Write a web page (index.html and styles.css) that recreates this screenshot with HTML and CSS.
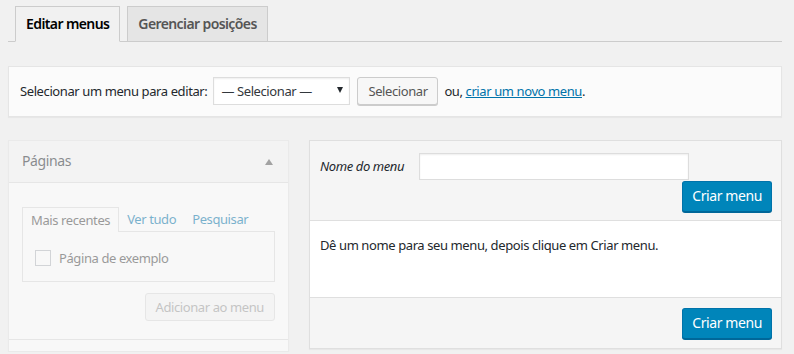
FILE: index.html
```html
<!DOCTYPE html>
<html lang="pt-BR">
<head>
    <meta charset="UTF-8">
    <title>Menus</title>
    <link rel="stylesheet" href="styles.css">
</head>
<body>
    <div class="wrap">
        <h2 class="nav-tab-wrapper">
            <a href="#" class="nav-tab nav-tab-active">Editar menus</a>
            <a href="#" class="nav-tab">Gerenciar posições</a>
        </h2>

        <div class="manage-menus">
            <label for="select-menu">Selecionar um menu para editar:</label>
            <div class="select-box">
                <span>— Selecionar —</span>
                <span class="select-arrow"></span>
            </div>
            <button class="button">Selecionar</button>
            <span class="add-new">ou, <a href="#">criar um novo menu</a>.</span>
        </div>

        <div class="nav-menus">
            <!-- left column, disabled until a menu exists -->
            <div class="menu-settings disabled">
                <div class="postbox">
                    <div class="section-title">
                        <h3>Páginas</h3>
                        <span class="toggle"></span>
                    </div>
                    <div class="section-content">
                        <ul class="tabs">
                            <li class="tabs-active">Mais recentes</li>
                            <li><a href="#">Ver tudo</a></li>
                            <li><a href="#">Pesquisar</a></li>
                        </ul>
                        <div class="tabs-panel">
                            <label class="item"><span class="checkbox"></span> Página de exemplo</label>
                        </div>
                        <div class="add-row">
                            <button class="button">Adicionar ao menu</button>
                        </div>
                    </div>
                    <div class="section-next"></div>
                </div>
            </div>

            <!-- right column -->
            <div class="menu-edit">
                <div class="menu-header">
                    <div class="menu-name-row">
                        <label for="menu-name">Nome do menu</label>
                        <input type="text" id="menu-name">
                    </div>
                    <div class="actions">
                        <button class="button-primary">Criar menu</button>
                    </div>
                </div>
                <div class="menu-body">
                    <p>Dê um nome para seu menu, depois clique em Criar menu.</p>
                </div>
                <div class="menu-footer">
                    <button class="button-primary">Criar menu</button>
                </div>
            </div>
        </div>
    </div>
</body>
</html>
```

FILE: styles.css
```css
* {
    margin: 0;
    padding: 0;
    box-sizing: border-box;
}

body {
    background: #f1f1f1;
    color: #444;
    font-family: "Noto Sans", "Open Sans", sans-serif;
    font-size: 13px;
    line-height: 1.4em;
    letter-spacing: -0.4px;
}

a {
    color: #0073aa;
}

.wrap {
    margin: 0 12px 0 8px;
}

/* Tabs */
.nav-tab-wrapper {
    display: flex;
    padding: 6px 0 0 7px;
    border-bottom: 1px solid #ccc;
    font-size: 14px;
    font-weight: 600;
    line-height: 24px;
    letter-spacing: -0.6px;
}

.nav-tab {
    display: block;
    margin-right: 7px;
    margin-bottom: -1px;
    padding: 5px 10px;
    border: 1px solid #ccc;
    background: #e5e5e5;
    color: #555;
    text-decoration: none;
}

.nav-tab-active {
    background: #f1f1f1;
    border-bottom-color: #f1f1f1;
    color: #000;
}

/* Select menu bar */
.manage-menus {
    display: flex;
    align-items: center;
    margin-top: 24px;
    padding: 10px 10px 11px 11px;
    background: #fbfbfb;
    border: 1px solid #e5e5e5;
    box-shadow: 0 1px 1px rgba(0, 0, 0, 0.04);
    color: #23282d;
}

.select-box {
    display: flex;
    align-items: center;
    justify-content: space-between;
    width: 137px;
    height: 28px;
    margin-left: 6px;
    padding: 0 6px 0 7px;
    background: #fff;
    border: 1px solid #ddd;
    box-shadow: inset 0 1px 2px rgba(0, 0, 0, 0.07);
    color: #32373c;
}

.select-arrow {
    width: 0;
    height: 0;
    margin-top: -2px;
    border-left: 3px solid transparent;
    border-right: 3px solid transparent;
    border-top: 6px solid #23282d;
}

.button {
    height: 28px;
    padding: 0 10px 1px;
    background: #f7f7f7;
    border: 1px solid #ccc;
    border-radius: 3px;
    box-shadow: 0 1px 0 #ccc;
    color: #555;
    font-family: inherit;
    font-size: 13px;
    letter-spacing: inherit;
}

.manage-menus .button {
    width: 81px;
    margin-left: 7px;
}

.add-new {
    margin-left: 6px;
}

/* Columns */
.nav-menus {
    display: flex;
    align-items: flex-start;
    gap: 20px;
    margin-top: 23px;
}

.menu-settings {
    width: 281px;
    flex-shrink: 0;
}

.disabled {
    opacity: 0.5;
}

.postbox {
    background: #fff;
    border: 1px solid #e5e5e5;
    box-shadow: 0 1px 1px rgba(0, 0, 0, 0.04);
}

.section-title {
    display: flex;
    align-items: center;
    justify-content: space-between;
    height: 42px;
    padding: 0 15px 0 13px;
    background: #f5f5f5;
    border-bottom: 1px solid #ddd;
}

.section-title h3 {
    font-size: 14px;
    font-weight: 400;
    color: #23282d;
}

.toggle {
    width: 0;
    height: 0;
    border-left: 4px solid transparent;
    border-right: 4px solid transparent;
    border-bottom: 6px solid #555;
}

.section-content {
    padding: 24px 13px 18px 13px;
}

.tabs {
    display: flex;
    list-style: none;
    line-height: 24px;
}

.tabs li {
    padding: 0 8px 0 8px;
}

.tabs li a {
    text-decoration: none;
}

.tabs-active {
    background: #fff;
    border: 1px solid #ddd;
    border-bottom: none;
    color: #444;
    position: relative;
    z-index: 1;
    margin-bottom: -1px;
}

.tabs-panel {
    height: 51px;
    padding: 17px 12px;
    background: #fff;
    border: 1px solid #ddd;
}

.item {
    display: flex;
    align-items: center;
    gap: 8px;
    color: #444;
}

.checkbox {
    width: 16px;
    height: 16px;
    border: 1px solid #b4b9be;
    background: #fff;
}

.add-row {
    display: flex;
    justify-content: flex-end;
    margin-top: 11px;
}

.add-row .button {
    height: 28px;
    background: #f7f7f7;
    border-color: #ddd;
    box-shadow: none;
    color: #999;
}

.section-next {
    height: 12px;
    border-top: 1px solid #ddd;
}

/* Edit menu panel */
.menu-edit {
    flex: 1;
    background: #fff;
    border: 1px solid #dfdfdf;
    box-shadow: 0 1px 1px rgba(0, 0, 0, 0.04);
}

.menu-header {
    padding: 12px 9px 8px 10px;
    background: #f5f5f5;
    border-bottom: 1px solid #dfdfdf;
}

.menu-name-row {
    display: flex;
    align-items: center;
}

.menu-name-row label {
    width: 99px;
    font-style: italic;
    color: #23282d;
}

.menu-name-row input {
    width: 270px;
    height: 27px;
    border: 1px solid #ddd;
    background: #fff;
    box-shadow: inset 0 1px 2px rgba(0, 0, 0, 0.07);
}

.actions {
    display: flex;
    justify-content: flex-end;
    margin-top: 1px;
}

.button-primary {
    height: 31px;
    padding: 0 9px 2px;
    background: #0085ba;
    border: 1px solid #0073aa;
    border-bottom-color: #006799;
    border-radius: 3px;
    box-shadow: 0 1px 0 #006799;
    color: #fff;
    font-family: inherit;
    font-size: 14px;
    letter-spacing: inherit;
}

.menu-body {
    height: 76px;
    padding: 15px 10px;
    color: #23282d;
}

.menu-footer {
    display: flex;
    justify-content: flex-end;
    padding: 10px 9px 9px;
    background: #f5f5f5;
    border-top: 1px solid #dfdfdf;
}
```
